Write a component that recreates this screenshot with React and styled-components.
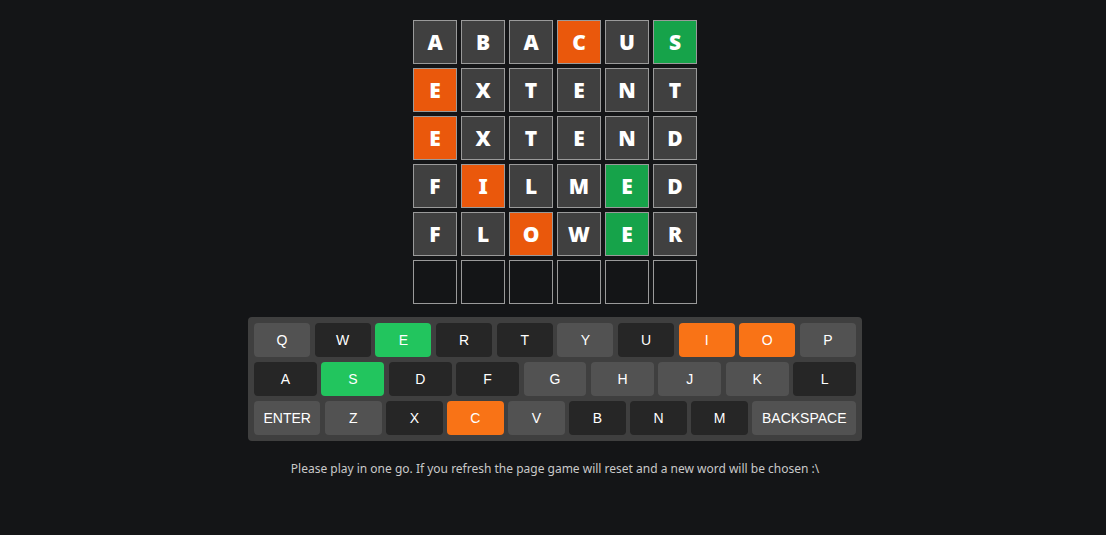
import styled, { createGlobalStyle } from 'styled-components'

const guesses = [
    ['ABACUS', 'aaapac'],
    ['EXTENT', 'paaaaa'],
    ['EXTEND', 'paaaaa'],
    ['FILMED', 'apaaca'],
    ['FLOWER', 'aapaca'],
    ['      ', 'eeeeee'],
]

const keyRows = [
    ['Q', 'W', 'E', 'R', 'T', 'Y', 'U', 'I', 'O', 'P'],
    ['A', 'S', 'D', 'F', 'G', 'H', 'J', 'K', 'L'],
    ['ENTER', 'Z', 'X', 'C', 'V', 'B', 'N', 'M', 'BACKSPACE'],
]

const keyState = {
    E: 'correct',
    S: 'correct',
    I: 'present',
    O: 'present',
    C: 'present',
    W: 'absent',
    R: 'absent',
    T: 'absent',
    U: 'absent',
    A: 'absent',
    D: 'absent',
    F: 'absent',
    L: 'absent',
    X: 'absent',
    B: 'absent',
    N: 'absent',
    M: 'absent',
}

const tileColors = {
    a: '#404040',
    p: '#ea580c',
    c: '#16a34a',
    e: 'transparent',
}

const keyColors = {
    correct: '#22c55e',
    present: '#f97316',
    absent: '#262626',
    unused: '#525252',
}

const App = () => {
    return (
        <>
            <GlobalStyle />
            <Page>
                <Board>
                    {guesses.map(([word, marks], r) =>
                        word.split('').map((ch, i) => (
                            <Tile key={r + '-' + i} $color={tileColors[marks[i]]}>
                                {ch.trim()}
                            </Tile>
                        ))
                    )}
                </Board>
                <Keyboard>
                    {keyRows.map((row, r) => (
                        <KeyRow key={r}>
                            {row.map((k) => (
                                <Key
                                    key={k}
                                    $wide={k.length > 1}
                                    $color={keyColors[keyState[k] || 'unused']}
                                >
                                    {k}
                                </Key>
                            ))}
                        </KeyRow>
                    ))}
                </Keyboard>
                <Note>
                    Please play in one go. If you refresh the page game will reset and a new word will be chosen :\
                </Note>
            </Page>
        </>
    )
}

const GlobalStyle = createGlobalStyle`
    body {
        margin: 0;
        background: #141517;
    }
`

const Page = styled.div`
    min-height: 535px;
    box-sizing: border-box;
    padding: 20px 0 0 4px;
    display: flex;
    flex-direction: column;
    align-items: center;
`

const Board = styled.div`
    display: grid;
    grid-template-columns: repeat(6, 44px);
    grid-auto-rows: 44px;
    gap: 4px;
`

const Tile = styled.div`
    box-sizing: border-box;
    border: 1px solid #9a9a9a;
    background: ${(p) => p.$color};
    color: #ffffff;
    font-family: 'Noto Sans', 'Open Sans', sans-serif;
    font-weight: 900;
    font-size: 21px;
    display: flex;
    justify-content: center;
    align-items: center;
`

const Keyboard = styled.div`
    margin-top: 13px;
    width: 614px;
    box-sizing: border-box;
    padding: 6px;
    background: #3f3f3f;
    border-radius: 4px;
    display: flex;
    flex-direction: column;
    gap: 5px;
`

const KeyRow = styled.div`
    display: flex;
    gap: 4.6px;
`

const Key = styled.div`
    flex: ${(p) => (p.$wide ? '0 0 auto' : '1 1 0')};
    padding: ${(p) => (p.$wide ? '0 9.5px' : '0')};
    height: 34px;
    border-radius: 4px;
    background: ${(p) => p.$color};
    color: #ffffff;
    font-family: 'Liberation Sans', Arial, sans-serif;
    font-size: 14px;
    display: flex;
    justify-content: center;
    align-items: center;
`

const Note = styled.p`
    margin: 19px 0 0;
    color: #c9c9c9;
    font-family: 'Noto Sans', 'Open Sans', sans-serif;
    font-size: 12px;
`

export default App
